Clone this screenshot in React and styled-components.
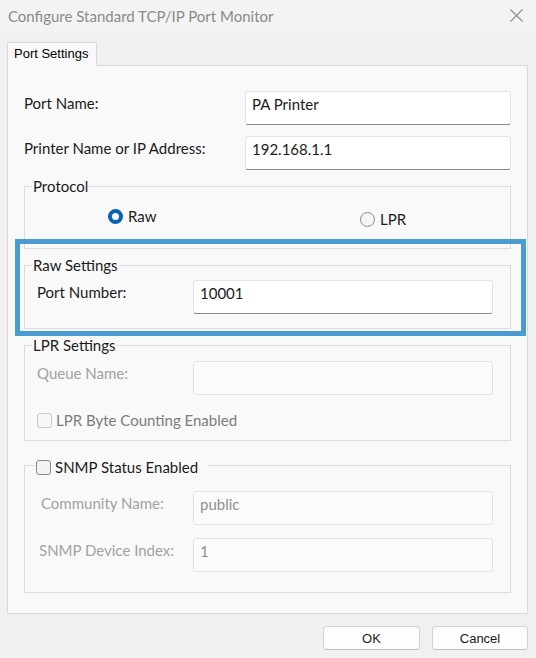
import styled, { createGlobalStyle } from 'styled-components';

const GlobalStyle = createGlobalStyle`
    html, body {
        margin: 0;
        padding: 0;
        background: #f0f0f0;
    }
    body {
        width: 536px;
        height: 658px;
        overflow: hidden;
        font-family: Lato, "Noto Sans", sans-serif;
        color: #1b1b1b;
    }
`

function Radio({ checked, label, drop }) {
    return (
        <RadioItem $drop={drop}>
            <RadioDot $checked={checked} />
            <span>{label}</span>
        </RadioItem>
    );
}

function Check({ label, disabled }) {
    return (
        <CheckItem $disabled={disabled}>
            <Box $disabled={disabled} />
            <span>{label}</span>
        </CheckItem>
    );
}

function App() {
    return (
        <Window>
            <GlobalStyle />
            <TitleBar>
                <Title>Configure Standard TCP/IP Port Monitor</Title>
                <svg width="13" height="13" viewBox="0 0 13 13">
                    <path d="M0.5 0.5L12.5 12.5M12.5 0.5L0.5 12.5" stroke="#8d8d8d" strokeWidth="1.1" fill="none" />
                </svg>
            </TitleBar>
            <Body>
                <TabStrip>
                    <Tab>Port Settings</Tab>
                </TabStrip>
                <TabPage>
                    <Row>
                        <Label>Port Name:</Label>
                        <Field $width={266}>PA Printer</Field>
                    </Row>
                    <Row $mt={11}>
                        <Label>Printer Name or IP Address:</Label>
                        <Field $width={266}>192.168.1.1</Field>
                    </Row>

                    <Group $mt={6} $pt={10} $pb={22}>
                        <Legend>Protocol</Legend>
                        <RadioRow>
                            <Radio checked label="Raw" />
                            <Radio label="LPR" drop={3} />
                        </RadioRow>
                    </Group>

                    <Group $mt={6} $pt={5} $pb={14}>
                        <Legend>Raw Settings</Legend>
                        <Row>
                            <Label $indent={12}>Port Number:</Label>
                            <Field $width={300}>10001</Field>
                        </Row>
                    </Group>

                    <Group $mt={6} $pt={6} $pb={10}>
                        <Legend>LPR Settings</Legend>
                        <Row>
                            <Label $indent={12} $disabled>Queue Name:</Label>
                            <Field $width={300} $disabled />
                        </Row>
                        <CheckRow>
                            <Check disabled label="LPR Byte Counting Enabled" />
                        </CheckRow>
                    </Group>

                    <Group $mt={12} $pt={14} $pb={20}>
                        <CheckLegend>
                            <Check label="SNMP Status Enabled" />
                        </CheckLegend>
                        <Row>
                            <Label $indent={16} $disabled>Community Name:</Label>
                            <Field $width={300} $disabled>public</Field>
                        </Row>
                        <Row $mt={13}>
                            <Label $indent={14} $disabled>SNMP Device Index:</Label>
                            <Field $width={300} $disabled>1</Field>
                        </Row>
                    </Group>
                </TabPage>
                <Buttons>
                    <Button $width={97}>OK</Button>
                    <Button $width={96}>Cancel</Button>
                </Buttons>
            </Body>
            <Highlight />
        </Window>
    );
}

export default App;

const Window = styled.div`
    position: relative;
    display: flex;
    flex-direction: column;
    width: 536px;
    height: 658px;
    background: #f0f0f0;
`

const TitleBar = styled.div`
    display: flex;
    align-items: center;
    justify-content: space-between;
    height: 33px;
    padding: 0 13px 2px 8px;
    box-sizing: border-box;
    background: #f3f3f3;
`

const Title = styled.span`
    font-size: 15px;
    color: #8a8a8a;
`

const Body = styled.div`
    display: flex;
    flex-direction: column;
    padding: 9px 8px 0 7px;
`

const TabStrip = styled.div`
    display: flex;
    height: 23px;
`

const Tab = styled.div`
    position: relative;
    z-index: 1;
    width: 90px;
    height: 24px;
    padding-left: 6px;
    box-sizing: border-box;
    border: 1px solid #d9d9d9;
    border-bottom: none;
    background: #f9f9f9;
    font-family: "Liberation Sans", Arial, sans-serif;
    font-size: 13px;
    line-height: 22px;
    color: #000000;
`

const TabPage = styled.div`
    display: flex;
    flex-direction: column;
    height: 549px;
    padding: 25px 16px 0 16px;
    box-sizing: border-box;
    border: 1px solid #d9d9d9;
    background: #f9f9f9;
`

const Row = styled.div`
    display: flex;
    align-items: flex-start;
    justify-content: space-between;
    margin-top: ${props => props.$mt || 0}px;
`

const Label = styled.span`
    margin-left: ${props => props.$indent || 0}px;
    font-size: 15px;
    line-height: 24px;
    color: ${props => props.$disabled ? "#a2a2a2" : "#1b1b1b"};
`

const Field = styled.div`
    width: ${props => props.$width}px;
    height: 34px;
    padding: 3px 6px;
    box-sizing: border-box;
    border: 1px solid #e3e3e3;
    border-bottom-color: ${props => props.$disabled ? "#e3e3e3" : "#8a8a8a"};
    border-radius: 3px;
    background: ${props => props.$disabled ? "#fbfbfb" : "#ffffff"};
    font-size: 15px;
    line-height: 18px;
    color: ${props => props.$disabled ? "#8f8f8f" : "#1b1b1b"};
`

const Group = styled.fieldset`
    margin: ${props => props.$mt}px 0 0;
    padding: ${props => props.$pt}px 17px ${props => props.$pb}px 0;
    border: 1px solid #dcdcdc;
    min-width: 0;
`

const Legend = styled.legend`
    margin-left: 7px;
    padding: 0 1px;
    font-size: 15px;
    line-height: 20px;
    color: #1b1b1b;
`

const CheckLegend = styled.legend`
    margin-left: 10px;
    padding: 4px 9px 0 1px;
    line-height: 20px;
`

const RadioRow = styled.div`
    display: grid;
    grid-template-columns: 252px auto;
    padding-left: 83px;
    height: 20px;
`

const RadioItem = styled.div`
    display: flex;
    align-items: center;
    gap: 5px;
    height: 20px;
    margin-top: ${props => props.$drop || 0}px;
    font-size: 15px;
    color: #1b1b1b;
`

const RadioDot = styled.span`
    width: 15px;
    height: 15px;
    box-sizing: border-box;
    border-radius: 50%;
    border: ${props => props.$checked ? "4.5px solid #0a62b5" : "1px solid #8a8a8a"};
    background: ${props => props.$checked ? "#ffffff" : "#f5f5f5"};
`

const CheckRow = styled.div`
    display: flex;
    margin-top: 15px;
    padding-left: 12px;
`

const CheckItem = styled.div`
    display: flex;
    align-items: center;
    gap: 4px;
    height: 20px;
    font-size: 15px;
    color: ${props => props.$disabled ? "#7c7c7c" : "#1b1b1b"};
`

const Box = styled.span`
    width: 15px;
    height: 15px;
    box-sizing: border-box;
    border: 1px solid ${props => props.$disabled ? "#c8c8c8" : "#8a8a8a"};
    border-radius: 3px;
    background: ${props => props.$disabled ? "#f7f7f7" : "#f3f3f3"};
`

const Buttons = styled.div`
    display: flex;
    justify-content: flex-end;
    gap: 12px;
    margin-top: 12px;
`

const Button = styled.button`
    width: ${props => props.$width}px;
    height: 24px;
    padding: 0;
    border: 1px solid #d3d3d3;
    border-bottom-color: #bcbcbc;
    border-radius: 4px;
    background: #fdfdfd;
    font-family: "Liberation Sans", Arial, sans-serif;
    font-size: 13px;
    color: #1b1b1b;
`

const Highlight = styled.div`
    position: absolute;
    left: 15px;
    top: 239px;
    width: 511px;
    height: 97px;
    box-sizing: border-box;
    border: 5px solid #4a9bd0;
    pointer-events: none;
`
